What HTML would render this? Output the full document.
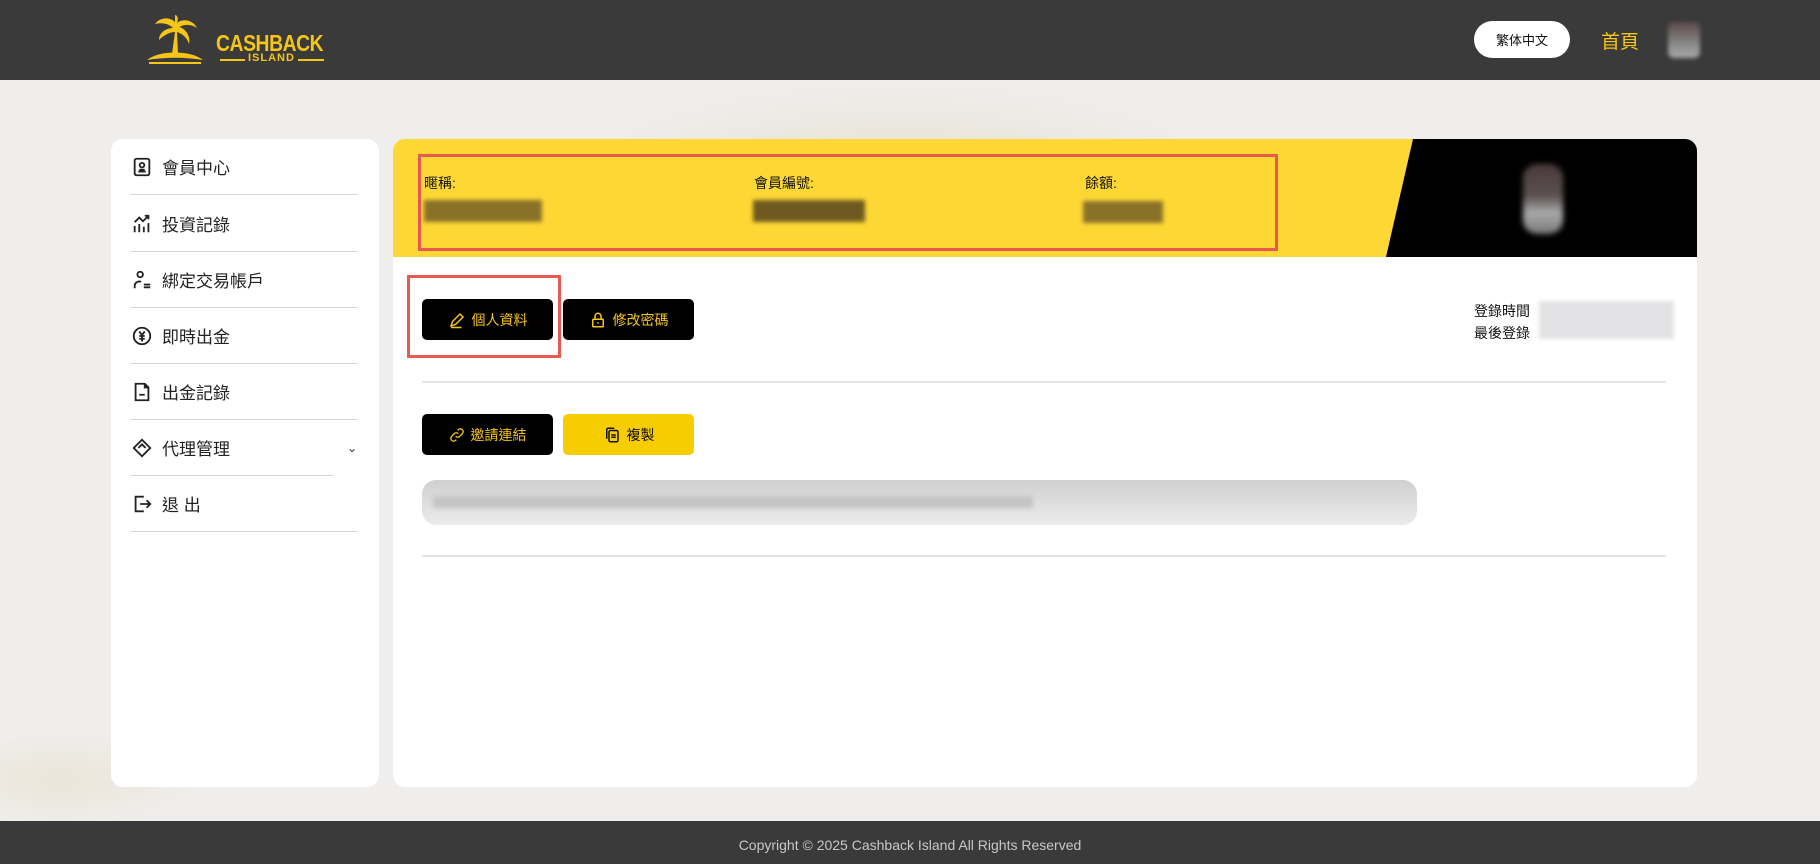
<!DOCTYPE html>
<html><head><meta charset="utf-8">
<style>
*{margin:0;padding:0;box-sizing:border-box}
body{width:1820px;height:864px;overflow:hidden;font-family:"Liberation Sans","Noto Sans CJK TC",sans-serif;background:#efeeec;position:relative}
.hdr{position:absolute;left:0;top:0;width:1820px;height:80px;background:#3a3a3a}
.bgfx{position:absolute;left:0;top:80px;width:1820px;height:741px;background:radial-gradient(ellipse 500px 160px at 900px 110px,#e6dfd0,rgba(239,238,236,0) 70%),radial-gradient(ellipse 200px 70px at 60px 700px,#ebe5d8,rgba(239,238,236,0) 70%),#efeeec}
.abs{position:absolute}
.side{left:111px;top:139px;width:268px;height:648px;background:#fff;border-radius:12px}
.item{position:absolute;left:20px;width:226px;height:56px;border-bottom:1px solid #d6d6d6;font-size:17px;color:#222;display:flex;align-items:center}
.item svg{width:22px;height:22px;margin-right:9px}
.main{left:393px;top:139px;width:1304px;height:648px;background:#fff;border-radius:12px;overflow:hidden}
.btn{position:absolute;height:41px;width:131px;border-radius:5px;background:#000;color:#f5c518;font-size:14px;display:flex;align-items:center;justify-content:center;gap:6px}
.lbl{position:absolute;top:34px;font-size:14px;color:#111}
.blur{position:absolute;height:22px;filter:blur(2px)}
</style></head><body>
<div class="bgfx"></div>
<div class="hdr">
 <svg class="abs" style="left:145px;top:14px" width="60" height="52" viewBox="0 0 60 52"><path d="M30 8 C24 2 14 4 10 10 C18 8 24 10 28 14 C22 14 14 18 14 26 C20 20 26 18 30 18 L27 40 L33 40 L32 18 C38 20 42 24 44 30 C46 22 40 14 34 13 C40 10 46 10 52 14 C48 6 38 4 32 9 C34 4 32 1 30 1 Z" fill="#f5c518"/><path d="M2 46 C14 36 46 36 58 46 C40 43 20 43 2 46 Z" fill="#f5c518"/><path d="M4 49 H56" stroke="#f5c518" stroke-width="2"/></svg>
 <div class="abs" style="left:216px;top:30px;font:bold 23px 'Liberation Sans',sans-serif;color:#f5c518;letter-spacing:-0.5px;transform:scaleX(.84);transform-origin:left">CASHBACK</div>
 <div class="abs" style="left:220px;top:59px;width:104px;height:2px;background:#f5c518"></div>
 <div class="abs" style="left:245px;top:52px;padding:0 3px;background:#3a3a3a;font:bold 11px 'Liberation Sans',sans-serif;color:#f5c518;letter-spacing:1px">ISLAND</div>
 <div class="abs" style="left:1474px;top:21px;width:96px;height:37px;background:#fff;border-radius:19px;font-size:13px;color:#111;display:flex;align-items:center;justify-content:center">繁体中文</div>
 <div class="abs" style="left:1601px;top:27px;font-size:19px;color:#f5c518">首頁</div>
 <div class="abs" style="left:1668px;top:22px;width:32px;height:36px;background:linear-gradient(#5a4848,#888 60%,#aaa);filter:blur(2px);border-radius:6px"></div>
</div>

<div class="abs side">
 <div class="item" style="top:0"><svg viewBox="0 0 24 24" fill="none" stroke="#222" stroke-width="2"><rect x="4" y="3" width="16" height="18" rx="2"/><circle cx="12" cy="10" r="2.5"/><path d="M8 17h8M9 15h6"/></svg>會員中心</div>
 <div class="item" style="top:57px"><svg viewBox="0 0 24 24" fill="none" stroke="#222" stroke-width="2"><path d="M4 21v-7M9 21v-9M14 21v-6M19 21v-10M4 10l5-5 4 4 6-6M15 3h4v4"/></svg>投資記錄</div>
 <div class="item" style="top:113px"><svg viewBox="0 0 24 24" fill="none" stroke="#222" stroke-width="2"><circle cx="10" cy="6" r="3"/><path d="M4 21v-3a5 5 0 0 1 7-4M14 17h7M14 20h7"/></svg>綁定交易帳戶</div>
 <div class="item" style="top:169px"><svg viewBox="0 0 24 24" fill="none" stroke="#222" stroke-width="2"><circle cx="12" cy="12" r="9"/><path d="M9 7l3 4 3-4M12 11v7M9 12h6M9 15h6"/></svg>即時出金</div>
 <div class="item" style="top:225px"><svg viewBox="0 0 24 24" fill="none" stroke="#222" stroke-width="2"><path d="M5 3h10l4 4v14H5z M15 3v4h4M9 15h6"/></svg>出金記錄</div>
 <div class="item" style="top:281px;width:203px"><svg viewBox="0 0 24 24" fill="none" stroke="#222" stroke-width="2"><path d="M12 3l9 9-9 9-9-9z M8 12l4-4 4 4"/></svg>代理管理</div>
 <div class="abs" style="left:236px;top:302px;font-size:12px;color:#333">⌄</div>
 <div class="item" style="top:337px"><svg viewBox="0 0 24 24" fill="none" stroke="#222" stroke-width="2"><path d="M14 4H5v16h9M10 12h11M17 8l4 4-4 4"/></svg>退 出</div>
</div>

<div class="abs main">
 <div class="abs" style="left:0;top:0;width:1304px;height:118px;background:#fdd835"></div>
 <div class="abs" style="left:0;top:0;width:1304px;height:118px;background:#000;clip-path:polygon(1020px 0,1304px 0,1304px 118px,993px 118px)"></div>
 <div class="abs" style="left:1130px;top:25px;width:40px;height:70px;background:linear-gradient(#4a3a3a,#5a5050 45%,#aaa 70%,#777);filter:blur(3px);border-radius:14px"></div>
 <div class="abs" style="left:25px;top:15px;width:860px;height:97px;border:3px solid #e85a4f"></div>
 <div class="lbl" style="left:31px">暱稱:</div>
 <div class="lbl" style="left:361px">會員編號:</div>
 <div class="lbl" style="left:692px">餘額:</div>
 <div class="blur" style="left:31px;top:61px;width:118px;background:#8a7128"></div>
 <div class="blur" style="left:360px;top:61px;width:112px;background:#6e5a20"></div>
 <div class="blur" style="left:690px;top:62px;width:80px;background:#8a7128"></div>

 <div class="abs" style="left:14px;top:136px;width:154px;height:83px;border:3px solid #e85a4f"></div>
 <div class="btn" style="left:29px;top:160px"><svg width="18" height="18" viewBox="0 0 24 24" fill="none" stroke="#f5c518" stroke-width="2"><path d="M4 20l2-6L16 4l4 4L10 18zM4 22h14"/></svg>個人資料</div>
 <div class="btn" style="left:170px;top:160px"><svg width="18" height="18" viewBox="0 0 24 24" fill="none" stroke="#f5c518" stroke-width="2"><rect x="5" y="11" width="14" height="10" rx="1"/><path d="M8 11V7a4 4 0 0 1 8 0v4M12 15v2"/></svg>修改密碼</div>
 <div class="abs" style="left:1081px;top:161px;font-size:14px;color:#111;line-height:22px">登錄時間<br>最後登錄</div>
 <div class="abs" style="left:1146px;top:162px;width:135px;height:38px;background:#e3e3e6;filter:blur(2px)"></div>
 <div class="abs" style="left:29px;top:242px;width:1244px;height:2px;background:#e2e2e2"></div>
 <div class="btn" style="left:29px;top:275px"><svg width="16" height="16" viewBox="0 0 24 24" fill="none" stroke="#f5c518" stroke-width="2"><path d="M10 14a4 4 0 0 0 6 0l4-4a4 4 0 0 0-6-6l-1 1M14 10a4 4 0 0 0-6 0l-4 4a4 4 0 0 0 6 6l1-1"/></svg>邀請連結</div>
 <div class="btn" style="left:170px;top:275px;background:#f7cd00;color:#111"><svg width="18" height="18" viewBox="0 0 24 24" fill="none" stroke="#111" stroke-width="2"><rect x="8" y="6" width="12" height="15" rx="2"/><path d="M5 17V5a2 2 0 0 1 2-2h8M11 12h6M11 15h6"/></svg>複製</div>
 <div class="abs" style="left:29px;top:341px;width:995px;height:45px;border-radius:14px;background:linear-gradient(#d0d0d0,#ebebeb)"></div>
 <div class="abs" style="left:40px;top:357px;width:600px;height:12px;background:#c4c4c4;filter:blur(2px)"></div>
 <div class="abs" style="left:29px;top:416px;width:1244px;height:2px;background:#e2e2e2"></div>
</div>

<div class="abs" style="left:0;top:821px;width:1820px;height:43px;background:#3a3a3a;color:#c8c8c8;font-size:14px;display:flex;align-items:center;justify-content:center;padding-top:4px">Copyright © 2025 Cashback Island All Rights Reserved</div>
</body></html>
